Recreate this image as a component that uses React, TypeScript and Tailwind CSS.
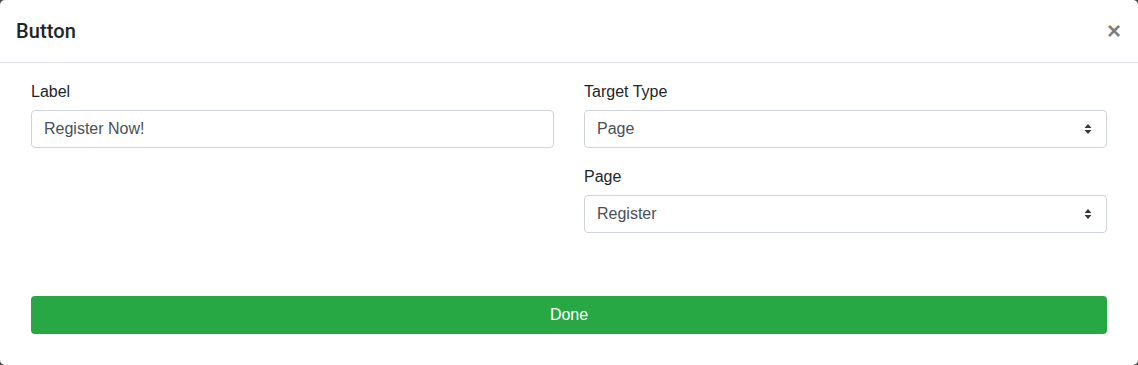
import React from "react";

function SelectArrows() {
  return (
    <svg width="8" height="12" viewBox="0 0 8 12" className="shrink-0">
      <path d="M4 1 L7.5 5 L0.5 5 Z" fill="#343a40" />
      <path d="M4 11 L7.5 7 L0.5 7 Z" fill="#343a40" />
    </svg>
  );
}

function FakeSelect({ value }: { value: string }) {
  return (
    <div className="h-[38px] rounded-[4px] border border-[#ced4da] bg-white flex items-center justify-between pl-[12px] pr-[14px] text-[16px] text-[#495057]">
      <span>{value}</span>
      <SelectArrows />
    </div>
  );
}

export default function App() {
  return (
    <div className="w-[1138px] h-[365px] bg-[#4a4a4a]" style={{ fontFamily: '"Liberation Sans", Arial, sans-serif' }}>
      <div className="w-full h-full bg-white rounded-[5px] flex flex-col text-[#212529]">
        <div className="h-[63px] border-b border-[#dee2e6] flex items-center justify-between pl-[16px] pr-[17px]">
          <h5 className="text-[20px] font-medium leading-[30px] font-['Roboto',sans-serif] tracking-[0.1px]">Button</h5>
          <span className="text-[24px] font-bold text-[#000] opacity-50 leading-none">×</span>
        </div>
        <div className="grid grid-cols-2 gap-x-[30px] pl-[31px] pr-[31px] pt-[17px]">
          <div className="flex flex-col">
            <label className="text-[16px] leading-[24px] mb-[6px]">Label</label>
            <div className="h-[38px] rounded-[4px] border border-[#ced4da] bg-white flex items-center px-[12px] text-[16px] text-[#495057]">
              Register Now!
            </div>
          </div>
          <div className="flex flex-col">
            <label className="text-[16px] leading-[24px] mb-[6px]">Target Type</label>
            <FakeSelect value="Page" />
            <label className="text-[16px] leading-[24px] mt-[17px] mb-[6px]">Page</label>
            <FakeSelect value="Register" />
          </div>
        </div>
        <div className="pl-[31px] pr-[31px] mt-[63px]">
          <div className="h-[38px] rounded-[4px] bg-[#28a745] text-white text-[16px] flex items-center justify-center">
            Done
          </div>
        </div>
      </div>
    </div>
  );
}
